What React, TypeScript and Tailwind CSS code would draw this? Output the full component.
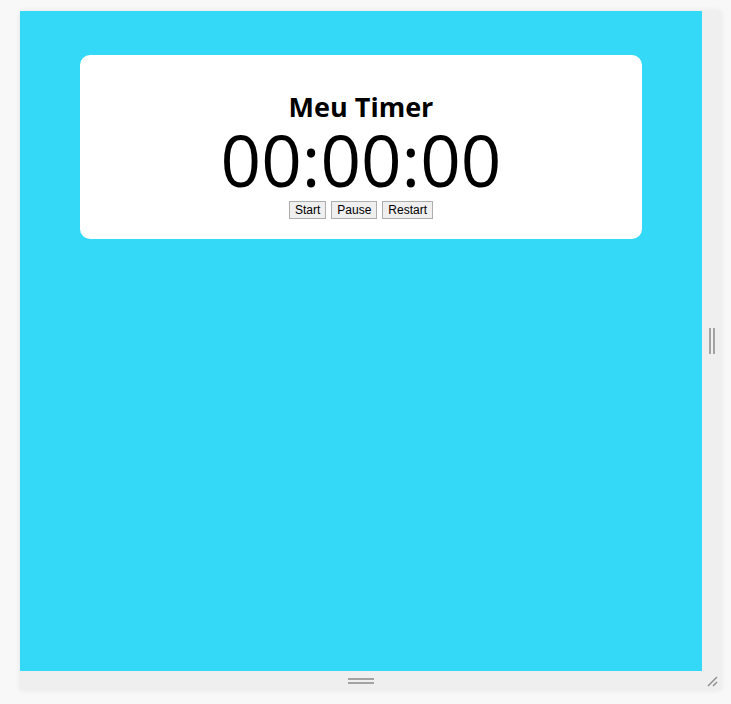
import { useEffect, useState } from "react";

const pad = (n: number) => String(n).padStart(2, "0");

function Timer() {
  const [secs, setSecs] = useState(0);
  const [running, setRunning] = useState(false);

  useEffect(() => {
    if (!running) return;
    const id = setInterval(() => setSecs((s) => s + 1), 1000);
    return () => clearInterval(id);
  }, [running]);

  const h = Math.floor(secs / 3600);
  const m = Math.floor((secs % 3600) / 60);
  const s = secs % 60;

  const btn =
    "h-[18px] border border-[#adadad] bg-[#efefef] px-[5px] text-[12px] leading-[16px] text-black [font-family:'Liberation_Sans',Arial,sans-serif]";

  return (
    <div className="mx-[60px] mt-[44px] flex flex-col items-center rounded-[10px] bg-white pt-[38px] pb-[20px] [font-family:'Open_Sans',sans-serif]">
      <h1 className="text-[27px] leading-[28px] font-bold text-black">Meu Timer</h1>
      <div className="mt-[11px] text-[71px] leading-[56px] text-black">
        {pad(h)}:{pad(m)}:{pad(s)}
      </div>
      <div className="mt-[13px] flex gap-[5px]">
        <button className={btn} onClick={() => setRunning(true)}>
          Start
        </button>
        <button className={btn} onClick={() => setRunning(false)}>
          Pause
        </button>
        <button
          className={btn}
          onClick={() => {
            setRunning(false);
            setSecs(0);
          }}
        >
          Restart
        </button>
      </div>
    </div>
  );
}

export default function App() {
  return (
    <div className="h-[704px] w-[731px] bg-[#f8f8f8] pt-[11px] pl-[20px]">
      <div className="grid w-[701px] grid-cols-[682px_19px] grid-rows-[660px_19px] shadow-[0_0_6px_rgba(0,0,0,0.08)]">
        {/* preview */}
        <div className="bg-[#33d9f7] overflow-hidden">
          <Timer />
        </div>
        {/* right handle */}
        <div className="flex items-center justify-center gap-[2px] bg-[#efefef]">
          <div className="h-[26px] w-[2px] bg-[#a3a3a3]" />
          <div className="h-[26px] w-[2px] bg-[#a3a3a3]" />
        </div>
        {/* bottom handle */}
        <div className="flex flex-col items-center justify-center gap-[2px] bg-[#efefef]">
          <div className="h-[2px] w-[26px] bg-[#a3a3a3]" />
          <div className="h-[2px] w-[26px] bg-[#a3a3a3]" />
        </div>
        {/* corner */}
        <div className="flex items-center justify-center bg-[#efefef]">
          <svg width="14" height="14" viewBox="0 0 14 14">
            <path d="M3 12 L12 3 M8 12 L12 8" stroke="#8f8f8f" strokeWidth="1.5" />
          </svg>
        </div>
      </div>
    </div>
  );
}
